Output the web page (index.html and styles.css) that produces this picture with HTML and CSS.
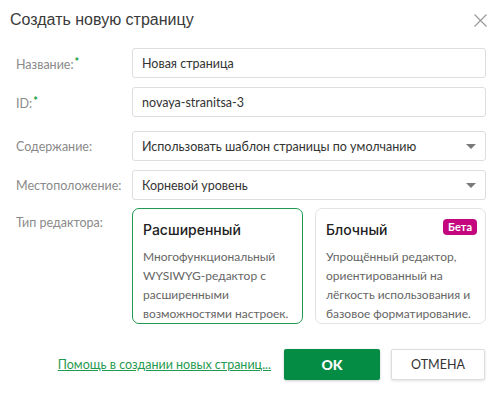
FILE: index.html
```html
<!DOCTYPE html>
<html lang="ru">
<head>
<meta charset="utf-8">
<link rel="stylesheet" href="styles.css">
</head>
<body>
<div class="dialog">
  <div class="header">
    <div class="title">Создать новую страницу</div>
    <svg class="close" width="13" height="13" viewBox="0 0 13 13"><path d="M0.5 0.5L12.5 12.5M12.5 0.5L0.5 12.5" stroke="#9a9a9a" stroke-width="1.2" fill="none"/></svg>
  </div>
  <div class="form">
    <div class="row r1">
      <div class="label">Название:<span class="req">*</span></div>
      <div class="field input">Новая страница</div>
    </div>
    <div class="row r2">
      <div class="label">ID:<span class="req">*</span></div>
      <div class="field input">novaya-stranitsa-3</div>
    </div>
    <div class="row r3">
      <div class="label">Содержание:</div>
      <div class="field select"><span>Использовать шаблон страницы по умолчанию</span><span class="arrow"></span></div>
    </div>
    <div class="row r4">
      <div class="label">Местоположение:</div>
      <div class="field select"><span>Корневой уровень</span><span class="arrow"></span></div>
    </div>
    <div class="row r5">
      <div class="label top">Тип редактора:</div>
      <div class="cards">
        <div class="card active">
          <div class="card-head"><span class="card-title">Расширенный</span></div>
          <div class="card-desc">Многофункциональный WYSIWYG-редактор с расширенными возможностями настроек.</div>
        </div>
        <div class="card">
          <div class="card-head"><span class="card-title">Блочный</span><span class="badge">Бета</span></div>
          <div class="card-desc">Упрощённый редактор, ориентированный на лёгкость использования и базовое форматирование.</div>
        </div>
      </div>
    </div>
  </div>
  <div class="footer">
    <a class="help" href="#">Помощь в создании новых страниц...</a>
    <button class="btn ok">OK</button>
    <button class="btn cancel">ОТМЕНА</button>
  </div>
</div>
</body>
</html>
```
FILE: styles.css
```css
html, body {
  margin: 0;
  padding: 0;
  background: #fff;
}
body {
  font-family: Lato, "Open Sans", sans-serif;
  color: #333;
  font-size: 12.5px;
}
.dialog {
  width: 501px;
  height: 394px;
  box-sizing: border-box;
}
.header {
  height: 40px;
  display: flex;
  align-items: center;
  justify-content: space-between;
  padding: 0 14px 0 10px;
}
.title {
  font-family: "Liberation Sans", Arial, sans-serif;
  font-size: 16px;
  color: #3a3a3a;
}
.close {
  display: block;
  margin-top: 1px;
}
.form {
  padding: 8px 15px 0 16px;
}
.row {
  display: grid;
  grid-template-columns: 116px 1fr;
  align-items: center;
}
.r1 { margin-bottom: 9px; }
.r2 { margin-bottom: 14px; }
.r3 { margin-bottom: 9px; }
.r4 { margin-bottom: 8px; }
.row.r5 { align-items: start; }
.label {
  color: #8a8a8a;
  font-size: 12.5px;
}
.label.top {
  padding-top: 7px;
}
.req {
  color: #17a34a;
  font-size: 11px;
  font-weight: 900;
  vertical-align: 3px;
  margin-left: 1px;
}
.field {
  height: 30px;
  box-sizing: border-box;
  border: 1px solid #dedede;
  border-radius: 3px;
  padding: 0 9px;
  display: flex;
  align-items: center;
  color: #333;
  font-size: 12.5px;
}
.select {
  justify-content: space-between;
}
.arrow {
  width: 0;
  height: 0;
  border-left: 5px solid transparent;
  border-right: 5px solid transparent;
  border-top: 5px solid #7a7a7a;
}
.cards {
  display: grid;
  grid-template-columns: 1fr 1fr;
  gap: 12px;
}
.card {
  height: 116px;
  box-sizing: border-box;
  border: 1px solid #e2e2e2;
  border-radius: 7px;
  padding: 8px 4px 0 10px;
}
.card.active {
  border-color: #1f9a50;
}
.card-head {
  display: flex;
  justify-content: space-between;
  align-items: center;
  height: 24px;
  margin-bottom: 6px;
  padding-right: 4px;
}
.card-title {
  font-family: Inter, Lato, sans-serif;
  font-size: 14px;
  font-weight: 500;
  color: #222;
}
.badge {
  background: #c4077e;
  color: #fff;
  font-size: 11px;
  font-weight: 700;
  border-radius: 4px;
  padding: 0 5px;
  height: 16px;
  line-height: 16px;
  margin-top: -4px;
}
.card-desc {
  font-size: 12px;
  line-height: 19px;
  color: #666;
}
.footer {
  display: flex;
  align-items: center;
  justify-content: flex-end;
  padding: 25px 16px 0 0;
}
.help {
  color: #1f9a50;
  font-size: 12.5px;
  margin-right: 13px;
  text-decoration: underline;
}
.btn {
  height: 31px;
  font-family: Lato, sans-serif;
  font-size: 12.5px;
  border-radius: 2px;
  cursor: pointer;
}
.ok {
  width: 96px;
  background: #058c44;
  color: #fff;
  border: none;
  font-weight: 900;
  font-size: 14px;
  box-shadow: 0 1px 3px rgba(0,0,0,0.2);
  margin-right: 11px;
}
.cancel {
  width: 94px;
  background: #fff;
  color: #333;
  border: 1px solid #ddd;
  box-shadow: 0 1px 3px rgba(0,0,0,0.12);
}
```
